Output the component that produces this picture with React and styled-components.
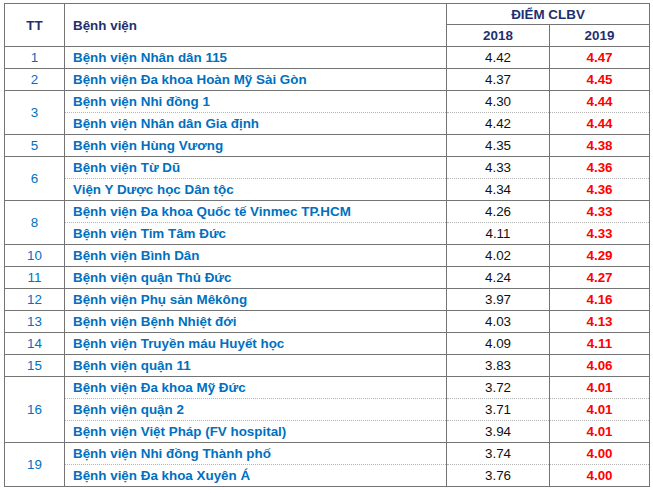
import React from 'react';
import styled, { createGlobalStyle } from 'styled-components';

const GlobalStyle = createGlobalStyle`
  body {
    margin: 0;
    background: #ffffff;
    font-family: "Liberation Sans", Arial, sans-serif;
  }
`;

const Wrap = styled.div`
  padding: 3px 0 0 4px;
`;

const Table = styled.table`
  border-collapse: collapse;
  table-layout: fixed;
  width: 645px;
  font-size: 13px;
  border: 1px solid #747474;
`;

const Th = styled.th`
  height: ${(p) => p.h || 21}px;
  padding: 0 ${(p) => (p.left ? '8px' : '0')};
  text-align: ${(p) => (p.left ? 'left' : 'center')};
  color: #1f3070;
  font-weight: bold;
  font-size: 13.4px;
  border: 1px solid #747474;
  vertical-align: middle;
`;

const Td = styled.td`
  height: 21px;
  padding: 0;
  text-align: center;
  vertical-align: middle;
  border-left: 1px solid #747474;
  border-right: 1px solid #747474;
  border-top: ${(p) => (p.dotted ? '1px dotted #b5b5b5' : '1px solid #747474')};
  white-space: nowrap;
`;

const Rank = styled(Td)`
  color: #0070c0;
  font-size: 13.4px;
  border-top: 1px solid #747474;
`;

const Name = styled(Td)`
  text-align: left;
  padding-left: 8px;
  color: #0070c0;
  font-weight: bold;
  font-size: 13.4px;
`;

const Old = styled(Td)`
  color: #111111;
  font-size: 13.4px;
`;

const New = styled(Td)`
  color: #ff0000;
  font-weight: bold;
  font-size: 13.4px;
`;

const groups = [
  ['1', [['Bệnh viện Nhân dân 115', '4.42', '4.47']]],
  ['2', [['Bệnh viện Đa khoa Hoàn Mỹ Sài Gòn', '4.37', '4.45']]],
  ['3', [
    ['Bệnh viện Nhi đồng 1', '4.30', '4.44'],
    ['Bệnh viện Nhân dân Gia định', '4.42', '4.44'],
  ]],
  ['5', [['Bệnh viện Hùng Vương', '4.35', '4.38']]],
  ['6', [
    ['Bệnh viện Từ Dũ', '4.33', '4.36'],
    ['Viện Y Dược học Dân tộc', '4.34', '4.36'],
  ]],
  ['8', [
    ['Bệnh viện Đa khoa Quốc tế Vinmec TP.HCM', '4.26', '4.33'],
    ['Bệnh viện Tim Tâm Đức', '4.11', '4.33'],
  ]],
  ['10', [['Bệnh viện Bình Dân', '4.02', '4.29']]],
  ['11', [['Bệnh viện quận Thủ Đức', '4.24', '4.27']]],
  ['12', [['Bệnh viện Phụ sản Mêkông', '3.97', '4.16']]],
  ['13', [['Bệnh viện Bệnh Nhiệt đới', '4.03', '4.13']]],
  ['14', [['Bệnh viện Truyền máu Huyết học', '4.09', '4.11']]],
  ['15', [['Bệnh viện quận 11', '3.83', '4.06']]],
  ['16', [
    ['Bệnh viện Đa khoa Mỹ Đức', '3.72', '4.01'],
    ['Bệnh viện quận 2', '3.71', '4.01'],
    ['Bệnh viện Việt Pháp (FV hospital)', '3.94', '4.01'],
  ]],
  ['19', [
    ['Bệnh viện Nhi đồng Thành phố', '3.74', '4.00'],
    ['Bệnh viện Đa khoa Xuyên Á', '3.76', '4.00'],
  ]],
];

export default function App() {
  return (
    <Wrap>
      <GlobalStyle />
      <Table>
        <colgroup>
          <col style={{ width: 60 }} />
          <col style={{ width: 382 }} />
          <col style={{ width: 103 }} />
          <col style={{ width: 100 }} />
        </colgroup>
        <thead>
          <tr>
            <Th rowSpan={2}>TT</Th>
            <Th rowSpan={2} left>Bệnh viện</Th>
            <Th colSpan={2} h={20}>ĐIỂM CLBV</Th>
          </tr>
          <tr>
            <Th h={21}>2018</Th>
            <Th h={21}>2019</Th>
          </tr>
        </thead>
        <tbody>
          {groups.map(([rank, rows]) =>
            rows.map(([name, a, b], i) => (
              <tr key={rank + i}>
                {i === 0 && <Rank rowSpan={rows.length}>{rank}</Rank>}
                <Name dotted={i > 0}>{name}</Name>
                <Old dotted={i > 0}>{a}</Old>
                <New dotted={i > 0}>{b}</New>
              </tr>
            ))
          )}
        </tbody>
      </Table>
    </Wrap>
  );
}
